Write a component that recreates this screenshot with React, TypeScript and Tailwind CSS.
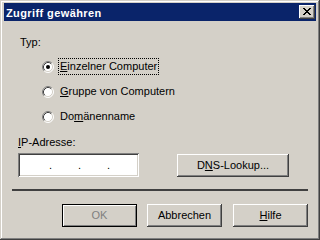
import React from 'react';

const raised =
  'shadow-[inset_-1px_-1px_#404040,inset_1px_1px_#ffffff,inset_-2px_-2px_#808080,inset_2px_2px_#d4d0c8]';

const Radio = ({ checked }: { checked?: boolean }) => (
  <svg width="12" height="12" viewBox="0 0 12 12" className="shrink-0">
    <circle cx="6" cy="6" r="5" fill="#fff" />
    <path d="M2.11 9.89A5.5 5.5 0 0 1 9.89 2.11" fill="none" stroke="#808080" />
    <path d="M9.89 2.11A5.5 5.5 0 0 1 2.11 9.89" fill="none" stroke="#fff" />
    <path d="M2.82 9.18A4.5 4.5 0 0 1 9.18 2.82" fill="none" stroke="#404040" />
    <path d="M9.18 2.82A4.5 4.5 0 0 1 2.82 9.18" fill="none" stroke="#d4d0c8" />
    {checked && <circle cx="6" cy="6" r="2" fill="#000" />}
  </svg>
);

const RadioRow = ({ children, checked, focused, className = '' }: { children: React.ReactNode; checked?: boolean; focused?: boolean; className?: string }) => (
  <div className={`flex items-center h-[17px] ml-[40px] ${className}`}>
    <Radio checked={checked} />
    <span
      className={`ml-[4px] h-[17px] px-[1px] flex items-center border border-dotted ${focused ? 'border-black' : 'border-transparent'}`}
    >
      {children}
    </span>
  </div>
);

const Button = ({ children, width = 'w-[75px]', def, disabled, className = '' }: { children: React.ReactNode; width?: string; def?: boolean; disabled?: boolean; className?: string }) =>
  def ? (
    <div className={`${width} h-[23px] border border-black ${className}`}>
      <div className="w-full h-full flex items-center justify-center shadow-[inset_1px_1px_#ffffff,inset_-1px_-1px_#808080]">
        <span className={disabled ? 'text-[#808080]' : ''}>{children}</span>
      </div>
    </div>
  ) : (
    <div className={`${width} h-[23px] flex items-center justify-center ${raised} ${className}`}>
      <span className={disabled ? 'text-[#808080]' : ''}>{children}</span>
    </div>
  );

export default function App() {
  return (
    <div className="w-[320px] h-[240px] bg-[#d4d0c8] p-[2px] flex flex-col font-['Liberation_Sans',Arial,sans-serif] text-[11px] leading-[13px] text-black shadow-[inset_-1px_-1px_#404040,inset_1px_1px_#d4d0c8,inset_-2px_-2px_#808080,inset_2px_2px_#ffffff]">
      {/* title bar */}
      <div className="mt-[1px] mx-[2px] h-[18px] bg-[#0a246a] flex items-start justify-between">
        <span className="pl-[2px] pt-[4px] text-white font-bold tracking-[0.4px]">Zugriff gewähren</span>
        <div className={`mt-[2px] mr-[1px] w-[16px] h-[14px] bg-[#d4d0c8] flex items-start ${raised}`}>
          <svg width="8" height="7" viewBox="0 0 8 7" className="ml-[4px] mt-[3px]" shapeRendering="crispEdges">
            {[0, 1, 2, 3, 4, 5, 6].map((i) => (
              <g key={i}>
                <rect x={i} y={i} width="2" height="1" fill="#000" />
                <rect x={6 - i} y={i} width="2" height="1" fill="#000" />
              </g>
            ))}
          </svg>
        </div>
      </div>

      <div className="ml-[18px] mt-[15px]">Typ:</div>

      <RadioRow checked focused className="mt-[9px]">
        <span><span className="underline">E</span>inzelner Computer</span>
      </RadioRow>
      <RadioRow className="mt-[8px]">
        <span><span className="underline">G</span>ruppe von Computern</span>
      </RadioRow>
      <RadioRow className="mt-[8px]">
        <span>Do<span className="underline">m</span>änenname</span>
      </RadioRow>

      <div className="ml-[16px] mt-[11px]">
        <span className="underline">I</span>P-Adresse:
      </div>

      <div className="flex items-start mt-[4px] ml-[16px]">
        <div className="w-[121px] h-[24px] bg-white flex items-center shadow-[inset_1px_1px_#808080,inset_-1px_-1px_#ffffff,inset_2px_2px_#404040,inset_-2px_-2px_#d4d0c8]">
          <span className="ml-[31px] w-[3px]">.</span>
          <span className="ml-[26px] w-[3px]">.</span>
          <span className="ml-[26px] w-[3px]">.</span>
        </div>
        <Button width="w-[112px]" className="ml-[38px] mt-[1px]">
          D<span className="underline">N</span>S-Lookup...
        </Button>
      </div>

      <div className="mx-[10px] mt-[12px] h-[2px] bg-[#404040]" />

      <div className="flex mt-[13px] ml-[60px]">
        <Button def disabled>OK</Button>
        <Button className="ml-[10px]">Abbrechen</Button>
        <Button className="ml-[11px]">
          <span className="underline">H</span>ilfe
        </Button>
      </div>
    </div>
  );
}
